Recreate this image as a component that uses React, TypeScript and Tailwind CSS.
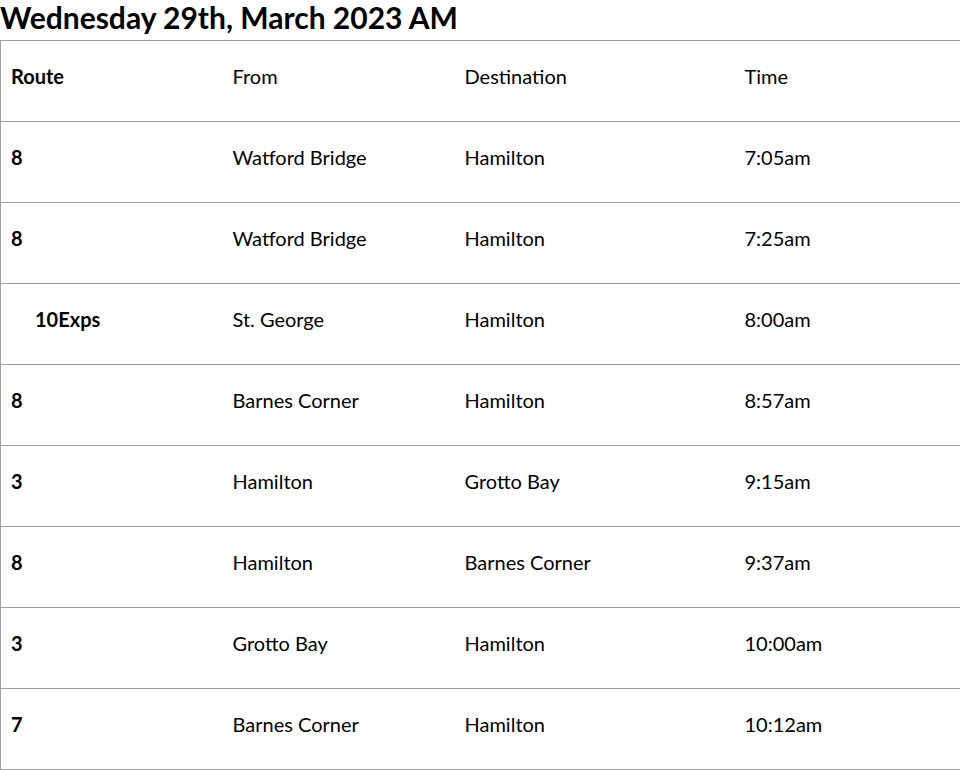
import React from 'react';

const rows = [
  { route: '8', from: 'Watford Bridge', to: 'Hamilton', time: '7:05am' },
  { route: '8', from: 'Watford Bridge', to: 'Hamilton', time: '7:25am' },
  { route: '10Exps', from: 'St. George', to: 'Hamilton', time: '8:00am', indent: true },
  { route: '8', from: 'Barnes Corner', to: 'Hamilton', time: '8:57am' },
  { route: '3', from: 'Hamilton', to: 'Grotto Bay', time: '9:15am' },
  { route: '8', from: 'Hamilton', to: 'Barnes Corner', time: '9:37am' },
  { route: '3', from: 'Grotto Bay', to: 'Hamilton', time: '10:00am' },
  { route: '7', from: 'Barnes Corner', to: 'Hamilton', time: '10:12am' },
];

const App = () => {
  return (
    <div className="w-[960px] bg-white text-black font-['Lato','Liberation_Sans',sans-serif]">
      <h2 className="text-[30px] font-bold leading-[40px] h-[40px] -mt-[3px] mb-[3px]">Wednesday 29th, March 2023 AM</h2>
      <table className="w-[960px] table-fixed border-collapse border border-[#a0a0a0] text-[20px]">
        <colgroup>
          <col className="w-[221px]" />
          <col className="w-[232px]" />
          <col className="w-[280px]" />
          <col className="w-[227px]" />
        </colgroup>
        <thead>
          <tr className="h-[81px] border-b border-[#a0a0a0]">
            <th className="text-left font-bold pl-[10px] pb-[10px]">Route</th>
            <th className="text-left font-normal pl-[11px] pb-[10px]">From</th>
            <th className="text-left font-normal pl-[11px] pb-[10px]">Destination</th>
            <th className="text-left font-normal pl-[11px] pb-[10px]">Time</th>
          </tr>
        </thead>
        <tbody>
          {rows.map((r, i) => (
            <tr key={i} className="h-[81px] border-b border-[#a0a0a0]">
              <td className={`font-bold pb-[10px] ${r.indent ? 'pl-[34px]' : 'pl-[10px]'}`}>{r.route}</td>
              <td className="pl-[11px] pb-[10px]">{r.from}</td>
              <td className="pl-[11px] pb-[10px]">{r.to}</td>
              <td className="pl-[11px] pb-[10px]">{r.time}</td>
            </tr>
          ))}
        </tbody>
      </table>
    </div>
  );
};

export default App;
